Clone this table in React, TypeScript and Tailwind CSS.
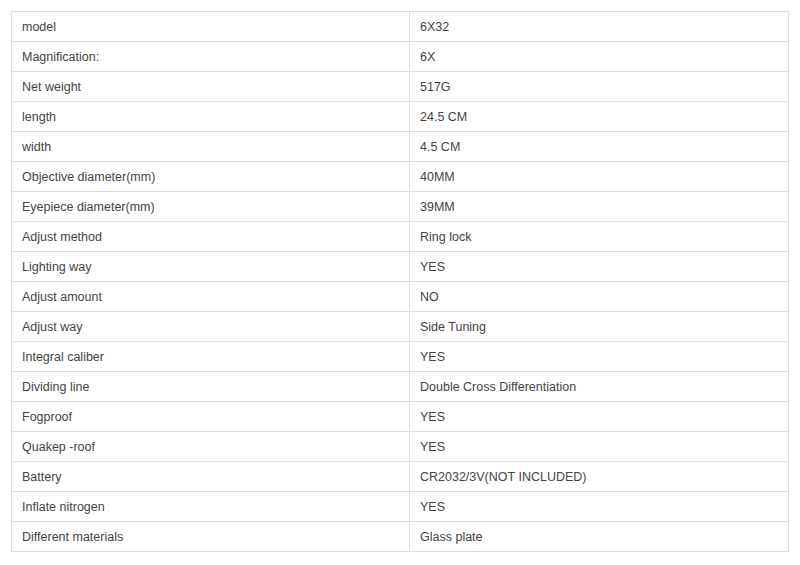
const specs: [string, string][] = [
  ["model", "6X32"],
  ["Magnification:", "6X"],
  ["Net weight", "517G"],
  ["length", "24.5 CM"],
  ["width", "4.5 CM"],
  ["Objective diameter(mm)", "40MM"],
  ["Eyepiece diameter(mm)", "39MM"],
  ["Adjust method", "Ring lock"],
  ["Lighting way", "YES"],
  ["Adjust amount", "NO"],
  ["Adjust way", "Side Tuning"],
  ["Integral caliber", "YES"],
  ["Dividing line", "Double Cross Differentiation"],
  ["Fogproof", "YES"],
  ["Quakep -roof", "YES"],
  ["Battery", "CR2032/3V(NOT INCLUDED)"],
  ["Inflate nitrogen", "YES"],
  ["Different materials", "Glass plate"],
];

export default function App() {
  return (
    <div className="w-[800px] h-[565px] bg-white pt-[11px] pl-[11px] font-['Liberation_Sans',Arial,sans-serif] text-[12.5px] text-[#444]">
      <table className="w-[778px] border-collapse border border-[#ddd]">
        <tbody>
          {specs.map(([label, value]) => (
            <tr key={label} className="h-[30px]">
              <td className="w-[398px] border border-[#ddd] pl-[10px] pt-[2px] align-middle">
                {label}
              </td>
              <td className="border border-[#ddd] pl-[10px] pt-[2px] align-middle">{value}</td>
            </tr>
          ))}
        </tbody>
      </table>
    </div>
  );
}
